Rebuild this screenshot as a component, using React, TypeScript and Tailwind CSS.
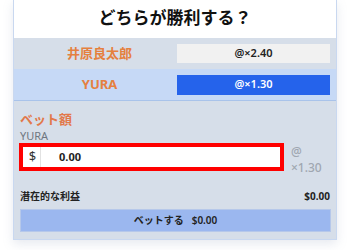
const font = { fontFamily: '"Noto Sans", "Noto Sans CJK JP", sans-serif' };

const App = () => {
  return (
    <div className="w-[350px] h-[250px] bg-white overflow-hidden" style={font}>
      <div className="ml-[13px] w-[324px] border-x border-b border-[#c9d8f0] shadow-[0_4px_10px_rgba(120,140,170,0.18)] flex flex-col">
        <div className="h-[38px] bg-white flex items-center justify-center text-[17px] font-semibold text-[#111] pb-[3px]">
          どちらが勝利する？
        </div>

        <div className="h-[31px] bg-[#d6dee9] flex items-center">
          <div className="w-[163px] pl-[8px] text-center text-[13px] font-bold text-[#e5803f]">
            井原良太郎
          </div>
          <div className="w-[153px] h-[19px] bg-[#f1f1f1] flex items-center justify-center text-[11px] font-semibold text-[#222]">
            @×2.40
          </div>
        </div>

        <div className="h-[32px] bg-[#c6d9f6] border-b border-[#a9c3ea] flex items-center">
          <div className="w-[163px] pl-[8px] text-center text-[13px] font-bold text-[#e5803f]">
            YURA
          </div>
          <div className="w-[153px] h-[20px] bg-[#2563eb] flex items-center justify-center text-[11px] font-semibold text-white">
            @×1.30
          </div>
        </div>

        <div className="bg-[#d6dee9] px-[5px] pt-[9px] pb-[7px] flex flex-col">
          <div className="pl-[1px] h-[19px] leading-[18px] text-[13px] font-bold text-[#e2784a]">ベット額</div>
          <div className="pl-[1px] h-[14px] leading-[14px] text-[11px] text-[#6f7680]">YURA</div>
          <div className="flex items-start gap-[7px]">
            <div className="w-[265px] h-[28px] border-[4px] border-[#ff0000] bg-white flex items-center">
              <span className="w-[18px] h-full flex items-center justify-center text-[13px] text-[#333] border-r border-[#e2e2e2] pl-[2px]">
                $
              </span>
              <span className="pl-[18px] text-[11px] font-bold text-[#222]">0.00</span>
            </div>
            <div className="mt-[1px] flex flex-col text-[12px] leading-[16px] text-[#a0a7b1] font-medium">
              <span>@</span>
              <span>×1.30</span>
            </div>
          </div>
          <div className="mt-[13px] pl-[1px] pr-[1px] flex justify-between items-center h-[14px] text-[10px] font-bold text-[#222]">
            <span>潜在的な利益</span>
            <span>$0.00</span>
          </div>
          <div className="mt-[6px] ml-[1px] h-[23px] bg-[#9bb7ef] border border-[#b6c8ea] flex items-center justify-center gap-[8px] text-[10px] font-semibold text-[#222]">
            <span>ベットする</span>
            <span>$0.00</span>
          </div>
        </div>
      </div>
    </div>
  );
};

export default App;
